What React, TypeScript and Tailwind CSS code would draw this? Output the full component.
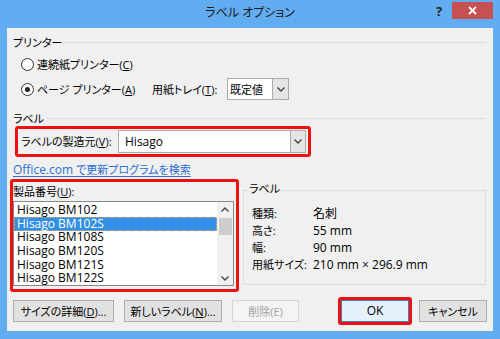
import React from "react";

const F = "[font-family:'Open_Sans','Noto_Sans_CJK_JP',sans-serif] [font-feature-settings:'palt']";

function Chevron({ up = false }: { up?: boolean }) {
  return (
    <svg width="8" height="5" viewBox="0 0 8 5">
      <path d={up ? "M0.5 4.5 L4 1 L7.5 4.5" : "M0.5 0.5 L4 4 L7.5 0.5"} fill="none" stroke="#444" strokeWidth="1.4" />
    </svg>
  );
}

function GroupHeader({ label }: { label: string }) {
  return (
    <div className="flex items-center h-[14px] gap-[3px]">
      <span className="leading-none whitespace-nowrap">{label}</span>
      <div className="flex-1 h-px bg-[#dcdcdc]" />
    </div>
  );
}

function Radio({ checked }: { checked?: boolean }) {
  return (
    <div className="w-[13px] h-[13px] shrink-0 rounded-full border border-[#333] bg-white flex items-center justify-center">
      {checked && <div className="w-[5px] h-[5px] rounded-full bg-[#222]" />}
    </div>
  );
}

function Btn({ children, w, disabled, def }: { children: React.ReactNode; w: string; disabled?: boolean; def?: boolean }) {
  const cls = disabled
    ? "bg-[#f4f4f4] border-[#d5d5d5] text-[#a0a0a0]"
    : def
    ? "bg-[#e5f1fb] border-[#3c7fb1] text-black"
    : "bg-[#e1e1e1] border-[#adadad] text-black";
  return (
    <div className={`${w} h-[22px] border ${cls} flex items-center justify-center leading-none whitespace-nowrap`}>{children}</div>
  );
}

const items = ["Hisago BM102", "Hisago BM102S", "Hisago BM108S", "Hisago BM120S", "Hisago BM121S", "Hisago BM122S"];

export default function App() {
  return (
    <div className={`w-[500px] h-[339px] bg-[#62acf1] flex flex-col text-[11px] text-black ${F}`}>
      {/* title bar */}
      <div className="h-[28px] flex items-start relative">
        <div className="flex-1 flex justify-center pt-[7px] text-[12px] leading-none text-[#1a1a1a]">ラベル オプション</div>
        <div className="absolute left-[436px] top-[5px] text-[13px] font-bold leading-none text-[#222]">?</div>
        <div className="absolute left-[452px] top-[2px] w-[41px] h-[17px] bg-[#c75050] flex items-center justify-center">
          <svg width="9" height="9" viewBox="0 0 9 9">
            <path d="M1 1 L8 8 M8 1 L1 8" stroke="white" strokeWidth="1.8" />
          </svg>
        </div>
      </div>

      {/* client */}
      <div className="mx-[7px] h-[303px] bg-[#f0f0f0] flex flex-col">
        {/* プリンター */}
        <div className="mt-[7px] ml-[6px] mr-[7px]">
          <GroupHeader label="プリンター" />
        </div>
        <div className="mt-[7px] ml-[14px] h-[16px] flex items-center gap-[3px]">
          <Radio />
          <span className="leading-none whitespace-nowrap">連続紙プリンター(<u>C</u>)</span>
        </div>
        <div className="mt-[6px] ml-[14px] h-[22px] flex items-center">
          <Radio checked />
          <span className="ml-[3px] leading-none w-[115px] shrink-0 whitespace-nowrap">ページ プリンター(<u>A</u>)</span>
          <span className="leading-none w-[75px] shrink-0 whitespace-nowrap">用紙トレイ(<u>T</u>):</span>
          <div className="w-[62px] h-[22px] bg-white border border-[#acacac] flex">
            <div className="flex-1 flex items-center pl-[2px] leading-none">既定値</div>
            <div className="w-[16px] h-full bg-[#e5e5e5] border-l border-[#acacac] flex items-center justify-center">
              <Chevron />
            </div>
          </div>
        </div>

        {/* ラベル */}
        <div className="mt-[11px] ml-[6px] mr-[7px]">
          <GroupHeader label="ラベル" />
        </div>
        <div className="mt-[1px] ml-[8px] w-[296px] h-[31px] border-[3px] border-[#ee1111] rounded-[3px] flex items-center">
          <span className="ml-[3px] w-[97px] shrink-0 leading-none whitespace-nowrap">ラベルの製造元(<u>V</u>):</span>
          <div className="w-[188px] h-[23px] bg-white border border-[#acacac] flex">
            <div className="flex-1 flex items-center pl-[6px] leading-none text-[12px]">Hisago</div>
            <div className="w-[15px] h-full bg-[#e5e5e5] border-l border-[#acacac] flex items-center justify-center">
              <Chevron />
            </div>
          </div>
        </div>
        <div className="mt-[6px] ml-[6px] h-[14px] flex items-center">
          <span className="leading-none whitespace-nowrap text-[#2a6fd0] underline underline-offset-2">
            <span className="text-[12px]">Office.com</span> で更新プログラムを検索
          </span>
        </div>

        {/* list + info */}
        <div className="mt-[2px] flex items-start">
          <div className="ml-[3px] w-[229px] h-[113px] border-[3px] border-[#ee1111] rounded-[3px] flex flex-col">
            <div className="h-[19px] flex items-center leading-none whitespace-nowrap">製品番号(<u>U</u>):</div>
            <div className="w-[221px] h-[85px] bg-white border border-[#828790] flex">
              <div className="flex-1 flex flex-col pt-[1px] text-[12px]">
                {items.map((it, i) => (
                  <div
                    key={it}
                    className={`h-[14px] flex items-center leading-none whitespace-nowrap ${
                      i === 1 ? "bg-[#3390ea] text-white border border-dotted border-[#f2a65a] pl-[2px]" : "pl-[3px]"
                    }`}
                  >
                    {it}
                  </div>
                ))}
              </div>
              <div className="w-[16px] h-full bg-[#f0f0f0] flex flex-col items-center">
                <div className="h-[14px] flex items-center justify-center">
                  <Chevron up />
                </div>
                <div className="w-[13px] h-[17px] mt-[2px] bg-[#cdcdcd]" />
                <div className="flex-1" />
                <div className="h-[14px] flex items-center justify-center">
                  <Chevron />
                </div>
              </div>
            </div>
          </div>
          <div className="ml-[4px] mt-[11px] w-[243px] h-[95px] border border-[#dcdcdc] relative flex flex-col pl-[8px] pt-[14px]">
            <span className="absolute left-[4px] top-[-8px] px-[1px] bg-[#f0f0f0] leading-none">ラベル</span>
            {[
              ["種類:", "名刺"],
              ["高さ:", "55 mm"],
              ["幅:", "90 mm"],
              ["用紙サイズ:", "210 mm × 296.9 mm"],
            ].map(([k, v]) => (
              <div key={k} className="h-[17px] flex items-center leading-none whitespace-nowrap">
                <span className="w-[61px] shrink-0">{k}</span>
                <span className="text-[12px]">{v}</span>
              </div>
            ))}
          </div>
        </div>

        {/* buttons */}
        <div className="mt-[5px] flex items-center">
          <div className="ml-[6px]">
            <Btn w="w-[101px]">サイズの詳細(<u>D</u>)...</Btn>
          </div>
          <div className="ml-[10px]">
            <Btn w="w-[98px]">新しいラベル(<u>N</u>)...</Btn>
          </div>
          <div className="ml-[10px]">
            <Btn w="w-[67px]" disabled>削除(E)</Btn>
          </div>
          <div className="ml-[39px] w-[74px] h-[28px] border-[3px] border-[#ee1111] rounded-[3px] flex items-center justify-center">
            <Btn w="w-[68px]" def>
              <span className="text-[12px]">OK</span>
            </Btn>
          </div>
          <div className="ml-[7px]">
            <Btn w="w-[68px]">キャンセル</Btn>
          </div>
        </div>
      </div>
    </div>
  );
}
